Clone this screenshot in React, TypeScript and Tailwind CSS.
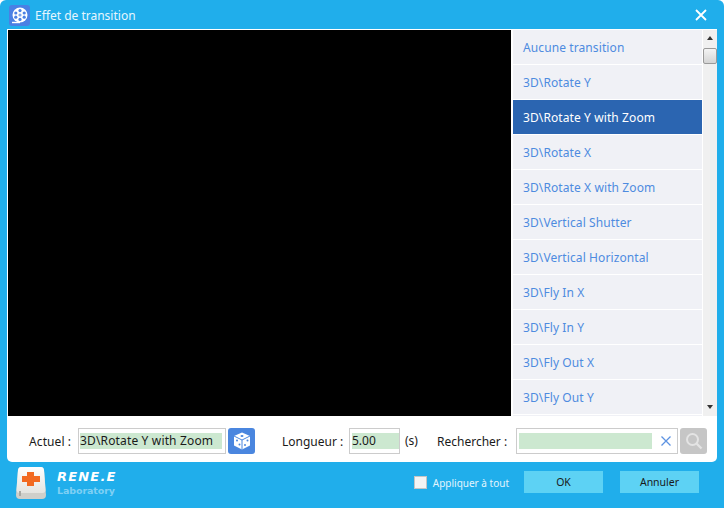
const items = [
  "Aucune transition",
  "3D\\Rotate Y",
  "3D\\Rotate Y with Zoom",
  "3D\\Rotate X",
  "3D\\Rotate X with Zoom",
  "3D\\Vertical Shutter",
  "3D\\Vertical Horizontal",
  "3D\\Fly In X",
  "3D\\Fly In Y",
  "3D\\Fly Out X",
  "3D\\Fly Out Y",
];

function ReelIcon() {
  return (
    <svg width="21" height="21" viewBox="0 0 21 21" className="shrink-0">
      <rect width="21" height="21" rx="3" fill="#4a80e4" />
      <circle cx="11" cy="10" r="7.5" fill="#fff" />
      <circle cx="11" cy="10" r="1.6" fill="#7fa4ea" />
      <circle cx="11" cy="5.6" r="1.6" fill="#4a80e4" />
      <circle cx="11" cy="14.4" r="1.6" fill="#4a80e4" />
      <circle cx="6.8" cy="8" r="1.6" fill="#4a80e4" />
      <circle cx="15.2" cy="8" r="1.6" fill="#4a80e4" />
      <circle cx="6.8" cy="12.2" r="1.6" fill="#4a80e4" />
      <circle cx="15.2" cy="12.2" r="1.6" fill="#4a80e4" />
      <path d="M3 17.5h8" stroke="#fff" strokeWidth="1.4" />
    </svg>
  );
}

function DiceIcon() {
  return (
    <svg width="20" height="20" viewBox="0 0 20 20">
      <path d="M10 1.5 18 5v9.5L10 18.5 2 14.5V5z" fill="#fff" />
      <path d="M2 5l8 4 8-4M10 9v9.5" stroke="#4a86df" strokeWidth="1" fill="none" />
      <ellipse cx="10" cy="5" rx="1.5" ry="1" fill="#4a86df" />
      <circle cx="5" cy="9.5" r="1" fill="#4a86df" />
      <circle cx="7.5" cy="13.5" r="1" fill="#4a86df" />
      <circle cx="13" cy="14" r="1" fill="#4a86df" />
      <circle cx="15.5" cy="9.5" r="1" fill="#4a86df" />
    </svg>
  );
}

function KeyLogo() {
  return (
    <svg width="30" height="32" viewBox="0 0 30 32" className="shrink-0">
      <defs>
        <linearGradient id="keyFace" x1="0" y1="0" x2="0" y2="1">
          <stop offset="0" stopColor="#ffffff" />
          <stop offset="1" stopColor="#e4e4e0" />
        </linearGradient>
      </defs>
      <path d="M5 0h20q2.500 0 3 3l2 25q0 4-4 4H4q-4 0-4-4L2 3q.5-3 3-3z" fill="#cfcfca" />
      <path d="M5 0h20q2.500 0 3 3l1.500 20q0 3-3 3H3.500q-3 0-3-3L2 3q.5-3 3-3z" fill="url(#keyFace)" />
      <path d="M3 24h2v5H3z" fill="#a9a9a4" />
      <path d="M11 5h7v4h6v6h-6v4h-7v-4H6V9h5z" fill="#f26a21" />
    </svg>
  );
}

export default function App() {
  return (
    <div className="h-[508px] w-[724px] overflow-hidden bg-white font-['Noto_Sans',sans-serif] text-[12px]">
      <div className="flex h-full w-full flex-col rounded-t-[6px] bg-[#20aeeb] pl-[7px] pr-[7px]">
        {/* Title bar */}
        <div className="flex h-[29px] shrink-0 items-center pl-[2px] pr-[2px] pt-[2px]">
          <ReelIcon />
          <span className="ml-[5px] flex-1 text-[12px] text-[#e6f6fe]">Effet de transition</span>
          <svg width="12" height="12" viewBox="0 0 12 12" className="mb-[2px] mr-[8px]">
            <path d="M1 1l10 10M11 1 1 11" stroke="#fff" strokeWidth="1.8" />
          </svg>
        </div>

        {/* White panel */}
        <div className="flex h-[433px] shrink-0 flex-col rounded-b-[5px] bg-white">
          <div className="flex h-[387px] shrink-0 pt-[1px]">
            <div className="ml-[1px] h-full w-[503px] bg-black" />
            <div className="ml-[2px] h-full w-[189px] overflow-hidden">
              {items.map((t, i) => (
                <div
                  key={t}
                  className={
                    i === 2
                      ? "mb-px flex h-[34px] items-center bg-[#2b65b1] pl-[10px] pt-[2px] tracking-[0.1px] text-white"
                      : "mb-px flex h-[34px] items-center bg-[#f0f1f6] pl-[10px] pt-[2px] tracking-[0.1px] text-[#4e8be0]"
                  }
                >
                  {t}
                </div>
              ))}
              <div className="h-[4px] bg-[#f0f1f6]" />
            </div>
            <div className="relative ml-px h-full w-[14px] bg-[#f0f0f0]">
              <div className="absolute left-[4px] top-[6px] h-0 w-0 border-x-[3.5px] border-b-[4px] border-x-transparent border-b-[#333]" />
              <div className="absolute left-0 top-[18px] h-[16px] w-[14px] rounded-[2px] border border-[#9a9a9a] bg-gradient-to-b from-[#f4f4f4] to-[#d4d4d4]" />
              <div className="absolute bottom-[7px] left-[4px] h-0 w-0 border-x-[3.5px] border-t-[4px] border-x-transparent border-t-[#333]" />
            </div>
          </div>

          <div className="flex flex-1 items-center pt-[4px] text-[#1a1a1a]">
            <span className="ml-[22px] w-[49px] pt-px tracking-[0.1px]">Actuel :</span>
            <div className="flex h-[26px] w-[148px] items-center border border-[#ccc] pl-px pr-[3px]">
              <div className="flex h-[16px] w-full items-center whitespace-nowrap bg-[#cce8d0] tracking-[0.15px]">3D\Rotate Y with Zoom</div>
            </div>
            <button className="ml-[2px] flex h-[26px] w-[27px] items-center justify-center rounded-[3px] bg-[#4a86df]">
              <DiceIcon />
            </button>
            <span className="ml-[27px] w-[67px] pt-px">Longueur :</span>
            <div className="flex h-[26px] w-[51px] items-center border border-[#ccc] pl-[2px]">
              <div className="flex h-[16px] w-full items-center bg-[#cce8d0]">5.00</div>
            </div>
            <span className="ml-[5px] w-[32px]">(s)</span>
            <span className="w-[79px] pt-px">Rechercher :</span>
            <div className="flex h-[26px] w-[162px] items-center border border-[#ccc] pl-[2px]">
              <div className="h-[16px] w-[133px] bg-[#cce8d0]" />
              <svg width="10" height="10" viewBox="0 0 10 10" className="ml-[9px]">
                <path d="M.5.5l9 9M9.5.5l-9 9" stroke="#5d93e2" strokeWidth="1.3" />
              </svg>
            </div>
            <button className="ml-[2px] flex h-[26px] w-[27px] items-center justify-center rounded-[3px] bg-[#c6c6c6]">
              <svg width="18" height="18" viewBox="0 0 18 18">
                <circle cx="7.5" cy="7.5" r="5.500" fill="none" stroke="#e4e4e4" strokeWidth="2" />
                <path d="M11.500 11.500l5 5" stroke="#e4e4e4" strokeWidth="2.400" />
              </svg>
            </button>
          </div>
        </div>

        {/* Footer */}
        <div className="flex flex-1 items-start">
          <div className="ml-[9px] mt-[5px]">
            <KeyLogo />
          </div>
          <div className="ml-[11px] mt-[7px] flex flex-col font-['DejaVu_Sans',sans-serif]">
            <span className="text-[13px] font-bold italic leading-[15px] tracking-[1.2px] text-white">RENE.E</span>
            <span className="mt-[1px] text-[9.5px] font-bold leading-[12px] tracking-[-0.1px] text-[#7fd0f4]">Laboratory</span>
          </div>
          <div className="ml-auto mr-[18px] mt-[9px] flex items-center">
            <div className="h-[13px] w-[13px] border border-[#c5c5c5] bg-[#f4f4f4]" />
            <span className="ml-[6px] mr-[15px] pt-[2px] text-[10px] text-[#e3f5fd]">Appliquer à tout</span>
            <button className="h-[22px] w-[79px] bg-[#5dd2f4] pt-px text-[10.5px] text-[#1a1a1a]">OK</button>
            <button className="ml-[17px] h-[22px] w-[79px] bg-[#5dd2f4] pt-px text-[10.5px] text-[#1a1a1a]">Annuler</button>
          </div>
        </div>
      </div>
    </div>
  );
}
